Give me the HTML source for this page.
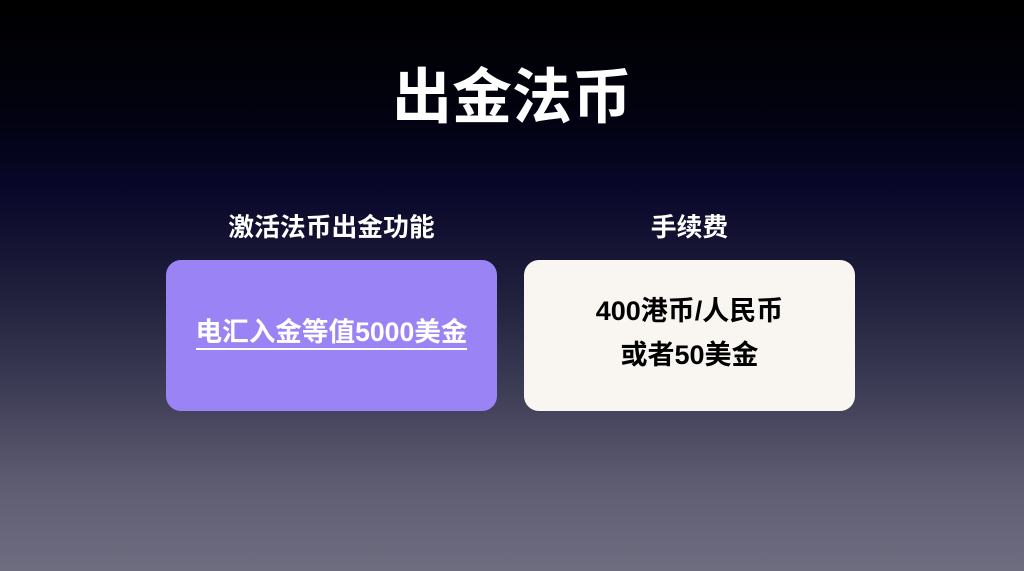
<!DOCTYPE html>
<html><head><meta charset="utf-8"><style>
html,body{margin:0;padding:0}
body{width:1024px;height:571px;overflow:hidden;position:relative;font-family:"Liberation Sans","Noto Sans CJK SC",sans-serif;font-weight:bold;
background:linear-gradient(180deg,#000 0%,#020210 20%,#08072a 33%,#1e1d3a 50%,#3d3c55 68%,#5e5d72 85%,#6e6d80 100%);}
.t{position:absolute;left:0;width:1024px;text-align:center;top:63px;font-size:60px;color:#fff;line-height:70px}
.l{position:absolute;top:213px;font-size:25.8px;color:#fff;text-align:center;width:331px;line-height:30px}
.c{position:absolute;top:260px;width:331px;height:151px;border-radius:15px;display:flex;flex-direction:column;align-items:center;justify-content:center}
.c1{left:166px;background:#9a84f5;color:#fff;font-size:26.6px}
.c1 span{border-bottom:2px solid #fff;padding-bottom:1px;line-height:30px;margin-top:-4px}
.c2{left:524px;background:#f9f6f2;color:#000;font-size:27px;line-height:44px}
.c2 div:first-child{margin-top:-6px}
</style></head><body>
<div class="t">出金法币</div>
<div class="l" style="left:166px">激活法币出金功能</div>
<div class="l" style="left:524px">手续费</div>
<div class="c c1"><span>电汇入金等值5000美金</span></div>
<div class="c c2"><div>400港币/人民币</div><div>或者50美金</div></div>
</body></html>
